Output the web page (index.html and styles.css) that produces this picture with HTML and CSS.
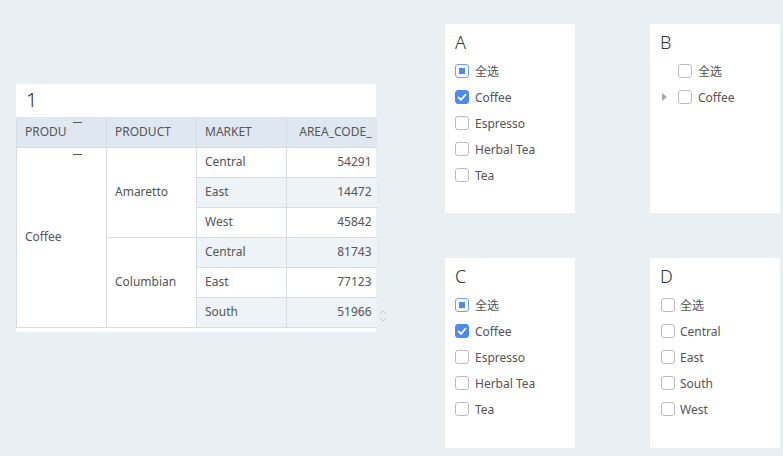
FILE: index.html
```html
<!DOCTYPE html>
<html>
<head>
<meta charset="utf-8">
<link rel="stylesheet" href="styles.css">
</head>
<body>
<div class="page">
  <div class="table-panel">
    <div class="table-title">1</div>
    <table class="grid">
      <colgroup><col class="c"><col class="c"><col class="c"><col class="c"></colgroup>
      <thead>
        <tr><th class="th-first"><span>PRODU</span><span class="dash"></span></th><th>PRODUCT</th><th>MARKET</th><th class="num">AREA_CODE_</th></tr>
      </thead>
      <tbody>
        <tr><td rowspan="6" class="span-cell first-cell"><span class="dash dash-body"></span>Coffee</td><td rowspan="3" class="span-cell">Amaretto</td><td>Central</td><td class="num">54291</td></tr>
        <tr class="alt"><td>East</td><td class="num">14472</td></tr>
        <tr><td>West</td><td class="num">45842</td></tr>
        <tr class="alt"><td rowspan="3" class="span-cell">Columbian</td><td>Central</td><td class="num">81743</td></tr>
        <tr><td>East</td><td class="num">77123</td></tr>
        <tr class="alt"><td>South</td><td class="num">51966</td></tr>
      </tbody>
    </table>
    <svg class="scroll-arrows" width="10" height="16" viewBox="0 0 10 16"><path d="M2 6 L5 3 L8 6" fill="none" stroke="#c5cbd0" stroke-width="1"/><path d="M2 10 L5 13 L8 10" fill="none" stroke="#c5cbd0" stroke-width="1"/></svg>
  </div>

  <div class="panels">
    <div class="panel">
      <div class="panel-title">A</div>
      <div class="item"><span class="cb ind"></span>全选</div>
      <div class="item"><span class="cb chk"><svg width="10" height="8" viewBox="0 0 10 8"><path d="M1 4 L4 6.8 L9 1.2" fill="none" stroke="#fff" stroke-width="1.8"/></svg></span>Coffee</div>
      <div class="item"><span class="cb"></span>Espresso</div>
      <div class="item"><span class="cb"></span>Herbal Tea</div>
      <div class="item"><span class="cb"></span>Tea</div>
    </div>
    <div class="panel">
      <div class="panel-title">B</div>
      <div class="item tree"><span class="arrow"></span><span class="cb"></span>全选</div>
      <div class="item tree"><span class="arrow"><span class="tri"></span></span><span class="cb"></span>Coffee</div>
    </div>
    <div class="panel">
      <div class="panel-title">C</div>
      <div class="item"><span class="cb ind"></span>全选</div>
      <div class="item"><span class="cb chk"><svg width="10" height="8" viewBox="0 0 10 8"><path d="M1 4 L4 6.8 L9 1.2" fill="none" stroke="#fff" stroke-width="1.8"/></svg></span>Coffee</div>
      <div class="item"><span class="cb"></span>Espresso</div>
      <div class="item"><span class="cb"></span>Herbal Tea</div>
      <div class="item"><span class="cb"></span>Tea</div>
    </div>
    <div class="panel panel-d">
      <div class="panel-title">D</div>
      <div class="item"><span class="cb"></span>全选</div>
      <div class="item"><span class="cb"></span>Central</div>
      <div class="item"><span class="cb"></span>East</div>
      <div class="item"><span class="cb"></span>South</div>
      <div class="item"><span class="cb"></span>West</div>
    </div>
  </div>
</div>
</body>
</html>
```

FILE: styles.css
```css
html, body {
  margin: 0;
  padding: 0;
  background: #e9f0f4;
  font-family: "Noto Sans", "Noto Sans CJK SC", sans-serif;
  color: #555;
  font-size: 12px;
}
.page {
  display: flex;
  align-items: flex-start;
  padding: 24px 0 0 16px;
  height: 432px;
}
.table-panel {
  position: relative;
  margin-top: 60px;
  width: 360px;
  height: 248px;
  background: #fff;
}
.table-title {
  height: 33px;
  line-height: 32px;
  padding-left: 10px;
  font-size: 20px;
  color: #333;
  font-weight: 300;
}
.grid {
  border-collapse: collapse;
  table-layout: fixed;
  width: 360px;
}
.grid col.c { width: 90px; }
.grid tr { height: 30px; }
.grid th, .grid td {
  border: 1px solid #d3dde6;
  padding: 0 8px 1px;
  font-weight: normal;
  text-align: left;
  white-space: nowrap;
  overflow: hidden;
  color: #555;
  box-sizing: border-box;
  height: 30px;
}
.grid thead th {
  background: #dfe8f1;
  border-top: none;
}
.grid th:last-child, .grid td:last-child { border-right: none; }
.grid .num { text-align: right; padding-right: 5px; }
.grid tr.alt td { background: #eef3f7; }
.grid tr.alt td.span-cell { background: #fff; }
.th-first { position: relative; }
.first-cell { position: relative; }
.dash {
  position: absolute;
  right: 24px;
  top: 5px;
  width: 9px;
  height: 1px;
  background: #555;
}
.dash-body { top: 6px; }
.scroll-arrows {
  position: absolute;
  left: 362px;
  top: 224px;
}
.panels {
  display: grid;
  grid-template-columns: 130px 130px;
  grid-template-rows: 189px 190px;
  column-gap: 75px;
  row-gap: 45px;
  margin-left: 69px;
}
.panel {
  background: #fff;
  padding-left: 10px;
}
.panel-title {
  padding-top: 6px;
  height: 24px;
  line-height: 24px;
  margin-bottom: 4px;
  font-size: 18px;
  color: #333;
  font-weight: 300;
}
.item {
  display: flex;
  align-items: center;
  height: 26px;
  gap: 6px;
  color: #555;
}
.panel-d .item { padding-left: 1px; gap: 5px; }
.cb {
  width: 14px;
  height: 14px;
  box-sizing: border-box;
  border: 1px solid #bcbcbc;
  border-radius: 3px;
  display: flex;
  align-items: center;
  justify-content: center;
  flex: none;
}
.cb.ind { border-color: #6aa2f7; }
.cb.ind::after {
  content: "";
  width: 6px;
  height: 6px;
  background: #4a8af4;
}
.cb.chk {
  background: #4a8af4;
  border-color: #4a8af4;
}
.tree { gap: 6px; }
.arrow {
  width: 11px;
  display: flex;
  align-items: center;
  padding-left: 2px;
  margin-right: -1px;
}
.tri {
  width: 0;
  height: 0;
  border-left: 5px solid #a8a8a8;
  border-top: 4px solid transparent;
  border-bottom: 4px solid transparent;
}
```
